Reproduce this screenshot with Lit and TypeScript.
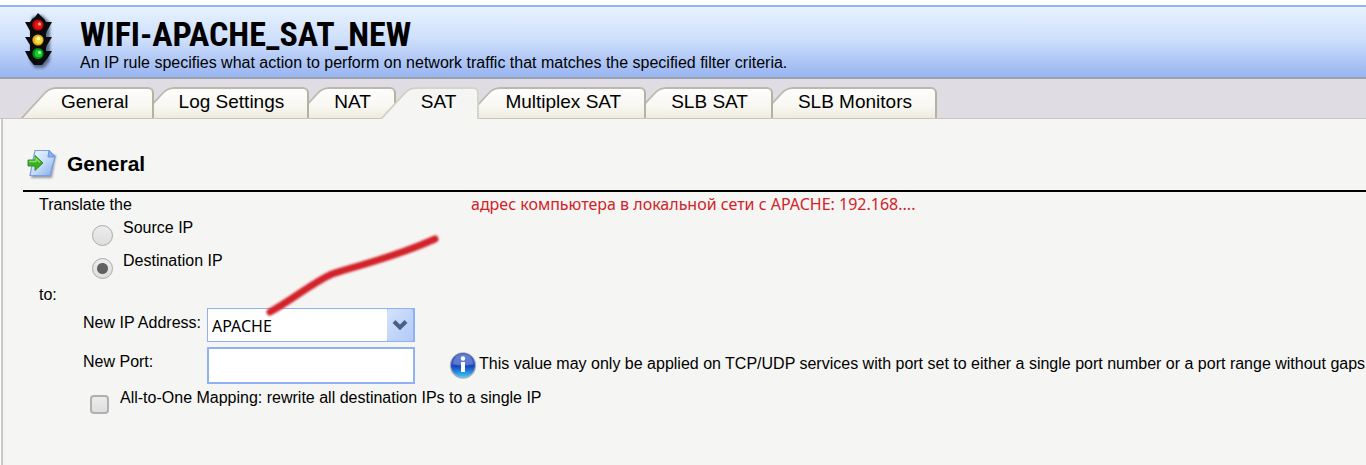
import { LitElement, html, css } from "lit";
import { customElement, state } from "lit/decorators.js";
import { classMap } from "lit/directives/class-map.js";

const TABS = ["General", "Log Settings", "NAT", "SAT", "Multiplex SAT", "SLB SAT", "SLB Monitors"];

@customElement("rule-tabs")
class RuleTabs extends LitElement {
  @state() active = 3;

  static styles = css`
    :host { display: block; }
    .tabs {
      display: flex;
      padding: 8px 0 0 36px;
      background: #dfdde3;
      border-bottom: 1px solid #c6c6ba;
    }
    .tab {
      position: relative;
      display: flex;
      flex: none;
      height: 31px;
      margin: 0 0 0 -15px;
      padding: 0;
      border: 0;
      background: none;
      font: 19px/26px "Liberation Sans", Arial, sans-serif;
      color: #000;
      white-space: nowrap;
    }
    .edge { display: block; width: 34px; height: 31px; flex: none; }
    .label {
      box-sizing: border-box;
      height: 31px;
      padding: 0 23px 0 6px;
      border-top: 2px solid #bab9ab;
      border-right: 2px solid #b3b2a3;
      border-radius: 0 6px 0 0;
      background: linear-gradient(#fdfdfb, #f8f7f2 60%, #eeebde);
    }
    .active { z-index: 10; margin-bottom: -1px; height: 32px; }
    .active .label { height: 32px; padding-right: 21px; background: #f5f5f3; border-color: #d4d4cb; }
    .active + .tab { margin-left: -14px; }
    .z0 { z-index: 7; } .z1 { z-index: 6; } .z2 { z-index: 5; } .z4 { z-index: 3; }
    .z5 { z-index: 2; } .z6 { z-index: 1; }
    .active .edge { height: 32px; }
  `;

  render() {
    return html`<div class="tabs" role="tablist">
      ${TABS.map((name, i) => {
        const on = i === this.active;
        return html`<button
          class=${classMap({ tab: true, active: on, ["z" + i]: !on })}
          role="tab" aria-selected=${on ? "true" : "false"}
          @click=${() => (this.active = i)}>
          <svg class="edge" viewBox="0 0 34 ${on ? 32 : 31}" aria-hidden="true">
            <defs><linearGradient id="g" x2="0" y2="1">
              <stop stop-color="#fdfdfb"/><stop offset=".6" stop-color="#f8f7f2"/><stop offset="1" stop-color="#eeebde"/>
            </linearGradient></defs>
            <path d="M0 32L23 7Q28 1 35 1V32Z" fill=${on ? "#f5f5f3" : "url(#g)"}/>
            <path d="M0 32L23 7Q28 1 35 1" fill="none" stroke=${on ? "#cfcfc5" : "#bab9ab"} stroke-width="1.8"/>
          </svg><span class="label">${name}</span>
        </button>`;
      })}
    </div>`;
  }
}

@customElement("app-root")
class AppRoot extends LitElement {
  static styles = css`
    :host {
      display: flex;
      flex-direction: column;
      min-height: 100vh;
      box-sizing: border-box;
      padding-top: 5px;
      background: #fff;
      color: #000;
      font: 16px/20px "Liberation Sans", Arial, sans-serif;
    }
    .header {
      display: flex;
      gap: 20px;
      height: 70px;
      padding-left: 20px;
      border-top: 2px solid #93b3f1;
      border-bottom: 2px solid #9aa1ae;
      background: linear-gradient(#e7f2ff, #cfe0fc 45%, #98b4f0);
    }
    .light { width: 40px; height: 60px; margin-top: 4px; flex: none; }
    h1 {
      margin: 8px 0 0;
      font: bold 34px/38px "Roboto Condensed", "Liberation Sans", Arial, sans-serif;
    }
    .header p { margin: 0; line-height: 20px; }
    .panel {
      position: relative;
      flex: 1;
      margin-left: 1px;
      padding: 25px 0 24px 20px;
      border-left: 2px solid #c9c9c2;
      background: #f5f5f3;
    }
    h2 {
      display: flex;
      align-items: center;
      gap: 8px;
      margin: 0 0 3px;
      padding: 0 0 6px 4px;
      border-bottom: 2px solid #000;
      font: bold 21px/40px "Liberation Sans", Arial, sans-serif;
    }
    .doc { width: 32px; height: 34px; }
    fieldset { margin: 0; padding: 0; border: 0; min-width: 0; }
    form { padding-left: 16px; }
    .lead { display: flex; }
    .lead .prompt { width: 432px; }
    .note { color: #d0232a; font: 16px/18px "Noto Sans", sans-serif; }
    .choice { display: flex; gap: 10px; height: 33px; padding-left: 53px; line-height: 26px; }
    .choice input {
      appearance: none;
      box-sizing: border-box;
      width: 21px;
      height: 21px;
      margin: 10px 0 0;
      flex: none;
      border: 1px solid #a9a9a9;
      border-radius: 50%;
      background: linear-gradient(#ececec, #dedede);
    }
    .choice input[type="radio"]:checked {
      background: radial-gradient(circle, #606060 0 5px, transparent 6px), linear-gradient(#ececec, #dedede);
    }
    .all { padding-left: 51px; gap: 11px; line-height: 26px; }
    .all input { width: 19px; height: 19px; border: 2px solid #b0b0b0; border-radius: 4px; }
    .to { line-height: 27px; }
    .field {
      display: grid;
      grid-template-columns: 124px 208px auto;
      padding-left: 44px;
      margin-bottom: 5px;
    }
    .last { margin-bottom: 1px; }
    .field > label { line-height: 30px; }
    .combo { display: grid; }
    .combo select, .combo svg { grid-area: 1 / 1; }
    .combo svg { justify-self: end; width: 28px; height: 34px; pointer-events: none; }
    select, .port {
      box-sizing: border-box;
      width: 100%;
      margin: 0;
      border: 1px solid #8eb2f3;
      border-radius: 0;
      background: #fff;
      color: #000;
      font: 16px/20px "Noto Sans", sans-serif;
    }
    select { appearance: none; height: 34px; padding: 2px 4px 0; }
    .port { height: 37px; border-width: 2px; padding: 2px 4px; }
    .hint { display: flex; gap: 2px; padding-left: 34px; white-space: nowrap; line-height: 34px; }
    .hint svg { width: 28px; height: 30px; margin-top: 3px; flex: none; }
    .stroke {
      position: absolute;
      left: 259px;
      top: 110px;
      width: 184px;
      height: 92px;
      pointer-events: none;
    }
  `;

  render() {
    return html`
      <header class="header">
        <svg class="light" viewBox="0 0 40 60" aria-hidden="true">
          <defs><filter id="s" x="-30%" y="-20%" width="170%" height="150%"><feGaussianBlur stdDeviation="1.6"/></filter></defs>
          <path d="M12 6L22 4L30 12V50L24 57H15L10 50Z" fill="#344866" opacity=".7" filter="url(#s)"/>
          <path d="M18 2L22 6Q25 8 26 11H32L27 20L26 23V26H32L27 34L26 37V40H32L27 48L22 54H14L9 48L5 40H10V34L5 26H10V20L5 11H10Q12 7 15 6Z" fill="#0b0b0d"/>
          <circle cx="18" cy="14" r="5.6" fill="#b80a08"/><circle cx="18.5" cy="14" r="3.8" fill="#ee1410"/><circle cx="19.5" cy="13" r="1.5" fill="#ffb3a8"/>
          <circle cx="18" cy="29" r="5.6" fill="#e0aa17"/><circle cx="18.5" cy="29" r="3.8" fill="#fcdc38"/><circle cx="18.5" cy="27.5" r="1.8" fill="#fffce0"/>
          <circle cx="18" cy="42.5" r="5.6" fill="#088a18"/><circle cx="18.5" cy="42.5" r="3.8" fill="#10cf28"/><circle cx="19.5" cy="41.5" r="1.5" fill="#b8ffb8"/>
        </svg>
        <div>
          <h1>WIFI-APACHE_SAT_NEW</h1>
          <p>An IP rule specifies what action to perform on network traffic that matches the specified filter criteria.</p>
        </div>
      </header>
      <rule-tabs></rule-tabs>
      <main class="panel">
        <h2>
          <svg class="doc" viewBox="0 0 32 34" aria-hidden="true">
            <defs>
              <linearGradient id="p" x2="1" y2="1"><stop stop-color="#f4faff"/><stop offset=".55" stop-color="#c2dafa"/><stop offset="1" stop-color="#7fa9ea"/></linearGradient>
              <filter id="b"><feGaussianBlur stdDeviation="1"/></filter>
            </defs>
            <path d="M9 6L29 8L25 31H4Z" fill="#555f78" opacity=".6" filter="url(#b)"/>
            <path d="M8 3.5L22 3.5L28 10L23 28.5H3Z" fill="url(#p)" stroke="#7c9fdb" stroke-width="1.2"/>
            <path d="M22 3.5L21 10L28 10Z" fill="#86afed" stroke="#6c94d8"/>
            <path d="M1 13H8V8.5L16 16L8 23.5V19H1Z" fill="#3caf22" stroke="#348f26"/>
            <path d="M2 14.5H9V11.5L13 15.5" fill="none" stroke="#8be264" stroke-width="1.3"/>
          </svg>
          General
        </h2>
        <form @submit=${(e: Event) => e.preventDefault()}>
          <fieldset>
            <div class="lead"><span class="prompt">Translate the</span><span class="note">адрес компьютера в локальной сети с APACHE: 192.168....</span></div>
            <div class="choice"><input id="src" type="radio" name="dir" /><label for="src">Source IP</label></div>
            <div class="choice"><input id="dst" type="radio" name="dir" checked /><label for="dst">Destination IP</label></div>
          </fieldset>
          <div class="to">to:</div>
          <div class="field">
            <label for="ip">New IP Address:</label>
            <div class="combo">
              <select id="ip"><option>APACHE</option></select>
              <svg viewBox="0 0 28 34" aria-hidden="true">
                <defs><linearGradient id="d" x2="1" y2="1"><stop stop-color="#d3e1fd"/><stop offset="1" stop-color="#b3cbf8"/></linearGradient></defs>
                <rect width="28" height="34" fill="#8eb2f3"/><rect x="0" y="1" width="26" height="32" rx="2" fill="url(#d)"/>
                <path d="M7 13.5L13 19.5L19 13.5" fill="none" stroke="#4a6185" stroke-width="4"/>
              </svg>
            </div>
          </div>
          <div class="field last">
            <label for="port">New Port:</label>
            <input id="port" class="port" type="text" />
            <div class="hint">
              <svg viewBox="0 0 28 30" aria-hidden="true">
                <defs><linearGradient id="i" x2="0" y2="1"><stop stop-color="#4262bd"/><stop offset=".45" stop-color="#3257c8"/><stop offset=".55" stop-color="#1644bd"/><stop offset="1" stop-color="#35c8ff"/></linearGradient></defs>
                <circle cx="14" cy="15.5" r="13.2" fill="#a8adb8"/><circle cx="14" cy="15" r="12" fill="url(#i)"/>
                <path d="M4 14Q5 4 14 4T24 14Q14 17 4 14Z" fill="#fff" opacity=".2"/>
                <circle cx="14" cy="8.5" r="2.2" fill="#fff"/><path d="M12 12H16V22H12Z" fill="#fff"/>
              </svg>
              <span>This value may only be applied on TCP/UDP services with port set to either a single port number or a port range without gaps</span>
            </div>
          </div>
          <div class="choice all"><input id="all" type="checkbox" /><label for="all">All-to-One Mapping: rewrite all destination IPs to a single IP</label></div>
        </form>
        <svg class="stroke" viewBox="0 0 184 92" aria-hidden="true">
          <defs><filter id="r"><feGaussianBlur stdDeviation=".8"/></filter></defs>
          <path d="M8 83C30 71 50 54 70 45C92 37 126 31 173 10" fill="none" stroke="#d2232a" stroke-width="7" stroke-linecap="round" filter="url(#r)"/>
        </svg>
      </main>
    `;
  }
}
